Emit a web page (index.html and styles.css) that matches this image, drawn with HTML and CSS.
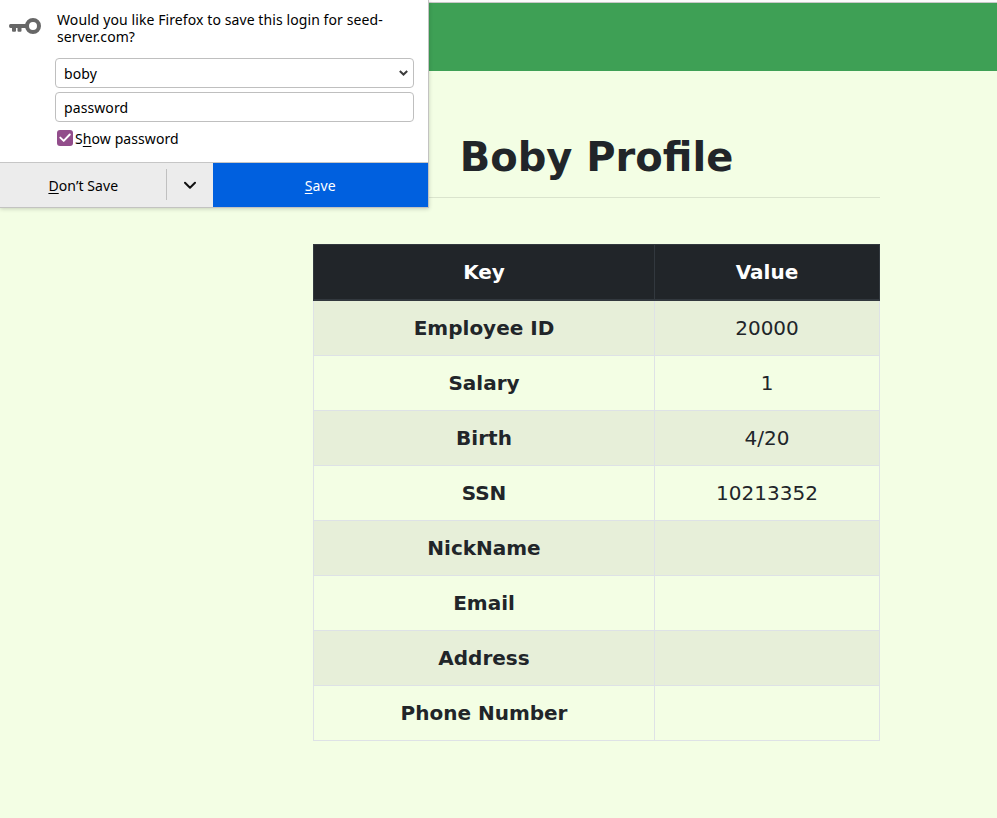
FILE: index.html
```html
<!DOCTYPE html>
<html lang="en">
<head>
<meta charset="utf-8">
<title>Boby Profile</title>
<link rel="stylesheet" href="styles.css">
</head>
<body>
<div class="toolbar-edge"></div>
<nav class="navbar"></nav>
<main class="container">
  <h1>Boby Profile</h1>
  <hr>
  <table>
    <thead><tr><th>Key</th><th>Value</th></tr></thead>
    <tbody>
      <tr><th>Employee ID</th><td>20000</td></tr>
      <tr><th>Salary</th><td>1</td></tr>
      <tr><th>Birth</th><td>4/20</td></tr>
      <tr><th>SSN</th><td>10213352</td></tr>
      <tr><th>NickName</th><td></td></tr>
      <tr><th>Email</th><td></td></tr>
      <tr><th>Address</th><td></td></tr>
      <tr><th>Phone Number</th><td></td></tr>
    </tbody>
  </table>
</main>
<aside class="doorhanger">
  <div class="panel">
    <svg class="key" width="32" height="16" viewBox="0 0 32 16"><path d="M1.500 6H17v4h-4.500v2.700q0 1-1 1h-2q-1 0-1-1V10H7v2.700q0 1-1 1H4q-1 0-1-1V10H1.500Q0 10 0 8t1.500-2z" fill="#676767"/><circle cx="24" cy="8" r="6" fill="none" stroke="#676767" stroke-width="4"/></svg>
    <div class="content">
      <p class="message">Would you like Firefox to save this login for seed-<br>server.com?</p>
      <div class="field"><span>boby</span><svg width="9" height="6" viewBox="0 0 9 6"><path d="M.8 1 4.500 4.500 8.200 1" fill="none" stroke="#3c3c3c" stroke-width="2"/></svg></div>
      <div class="field"><span>password</span></div>
      <div class="show"><span class="check"><svg width="16" height="16" viewBox="0 0 16 16"><path d="M3.300 7.600 6.700 10.900 12.800 4.500" fill="none" stroke="#fff" stroke-width="1.900" stroke-linecap="round" stroke-linejoin="round"/></svg></span><span class="label">S<u>h</u>ow password</span></div>
    </div>
  </div>
  <div class="actions">
    <div class="button dont"><span><u>D</u>on’t Save</span></div>
    <div class="button more"><svg width="12" height="8" viewBox="0 0 12 8"><path d="M1 1.700 6 6.700 11 1.700" fill="none" stroke="#111" stroke-width="2" stroke-linecap="round" stroke-linejoin="round"/></svg></div>
    <div class="button save"><span><u>S</u>ave</span></div>
  </div>
</aside>
</body>
</html>
```
FILE: styles.css
```css
* { box-sizing: border-box; }
body {
  margin: 0;
  height: 818px;
  overflow: hidden;
  background: #f3fee4;
  color: #212529;
  font: 20px/30px "DejaVu Sans", sans-serif;
}
.toolbar-edge { height: 3px; background: #fbfbfb; border-bottom: 1px solid #c8c8c8; }
.navbar { height: 68px; background: #3ea055; }
.container { width: 567px; margin-left: 313px; padding-top: 62px; }
h1 { margin: 0; font-size: 40px; line-height: 48px; font-weight: bold; text-align: center; }
hr { margin: 16px 0 46px; border: 0; height: 1px; background: #dae4cd; }
table { width: 567px; table-layout: fixed; border-collapse: separate; border-spacing: 0; text-align: center; }
th, td { height: 55px; padding: 0; border: solid #dee2e6; border-width: 0 1px 1px 0; }
th:first-child { width: 342px; border-left-width: 1px; }
thead th { height: 57px; color: #fff; background: #212529; border-color: #32383e; border-width: 1px 1px 2px 0; }
tbody tr:nth-child(odd) > * { background: #e7efd9; }

.doorhanger {
  position: absolute;
  left: 0;
  top: 0;
  width: 429px;
  height: 208px;
  background: #fff;
  color: #000;
  border: solid #c3c3c1;
  border-width: 0 1px 1px 0;
  box-shadow: 0 1px 4px rgba(0, 0, 0, .18);
  font: 14px/17px "Noto Sans", "Open Sans", sans-serif;
  letter-spacing: .09px;
}
.panel { display: flex; height: 162px; padding-left: 9px; }
.key { margin-top: 18px; }
.content { width: 359px; margin-left: 14px; padding-top: 11px; }
.message { margin: 0 0 13px 2px; white-space: nowrap; }
.field {
  display: flex;
  align-items: center;
  justify-content: space-between;
  height: 30px;
  margin-bottom: 4px;
  padding: 0 5px 0 8px;
  border: 1px solid #bfbfbf;
  border-radius: 4px;
}
.show { display: flex; align-items: flex-start; height: 17px; margin: 8px 0 0 2px; }
.check { width: 16px; height: 16px; margin-right: 2px; border-radius: 3px; background: #924d8b; }
.check svg { display: block; }
.actions { display: flex; height: 45px; border-top: 1px solid #c6c6c6; background: #ececec; }
.button { display: flex; align-items: center; justify-content: center; }
.dont { width: 167px; }
.more { width: 46px; position: relative; }
.more::before { content: ""; position: absolute; left: -1px; top: 6px; height: 31px; border-left: 1px solid #c0c0c0; }
.save { width: 216px; background: #0060df; color: #fff; }
u { text-underline-offset: 2px; text-decoration-thickness: 1px; }
```
